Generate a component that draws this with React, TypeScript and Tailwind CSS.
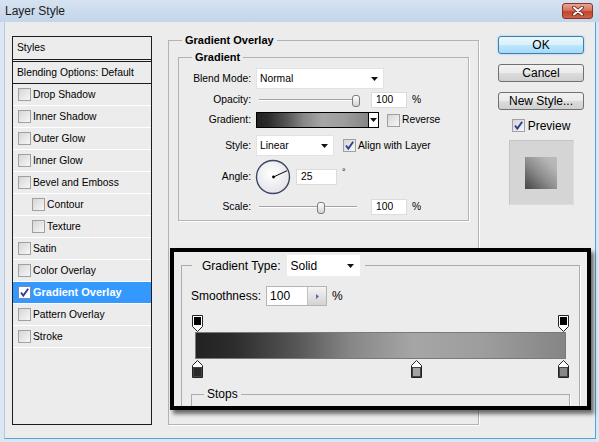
import React from "react"

type StyleItem = { label: string; indent?: boolean; checked?: boolean; active?: boolean }

const styleItems: StyleItem[] = [
  { label: "Drop Shadow" },
  { label: "Inner Shadow" },
  { label: "Outer Glow" },
  { label: "Inner Glow" },
  { label: "Bevel and Emboss" },
  { label: "Contour", indent: true },
  { label: "Texture", indent: true },
  { label: "Satin" },
  { label: "Color Overlay" },
  { label: "Gradient Overlay", checked: true, active: true },
  { label: "Pattern Overlay" },
  { label: "Stroke" },
]

// gradient stops (location in %)
const opacityStops = [0, 100]
const colorStops = [
  { at: 0, color: "#2a2a2a" },
  { at: 59.7, color: "#a3a3a3" },
  { at: 100, color: "#878787" },
]

const GRADIENT =
  "bg-[linear-gradient(to_right,#222_0%,#2c2c2c_10%,#555_27%,#878787_42%,#a6a6a6_59%,#9d9d9d_78%,#858585_100%)]"

function CheckBox({ checked = false, white = false }: { checked?: boolean; white?: boolean }) {
  return (
    <span
      className={`flex h-[13px] w-[13px] shrink-0 items-center justify-center border ${
        white ? "border-[#7c89b3] bg-white" : "border-[#a0a0a0] bg-[linear-gradient(135deg,#d6d6d6,#f7f7f7)]"
      }`}
    >
      {checked && (
        <svg width="11" height="11" viewBox="0 0 11 11">
          <path d="M2 5.5 L4.3 8.6 L9.2 1.8" fill="none" stroke="#2c3f9c" strokeWidth="1.9" />
        </svg>
      )}
    </span>
  )
}

function DownArrow() {
  return (
    <svg width="7" height="4" viewBox="0 0 7 4">
      <path d="M0 0H7L3.5 4Z" fill="#111" />
    </svg>
  )
}

function Slider({ pct }: { pct: number }) {
  return (
    <div className="relative h-[16px] w-[106px]">
      <div className="absolute left-[3px] top-[7px] h-[2px] w-[98px] border-t border-[#a3a3a3] bg-white" />
      <div
        className="absolute top-[3px] h-[12px] w-[8px] rounded-[3px] border border-[#7b7b7b] bg-[linear-gradient(#ffffff,#d2d2d2)]"
        style={{ left: `${pct * 98 - 2}px` }}
      />
    </div>
  )
}

function NumBox({ value }: { value: string }) {
  return (
    <div className="flex h-[16px] w-[36px] items-center border border-[#dcdcdc] bg-white pl-[4px]">{value}</div>
  )
}

function OpacityStop({ at }: { at: number }) {
  return (
    <svg
      className="absolute top-0"
      style={{ left: `${1 + (at / 100) * 366}px` }}
      width="11"
      height="17"
      viewBox="0 0 11 17"
    >
      <path d="M0.5 0.5H10.5V11.5L5.5 16.5L0.5 11.5Z" fill="#fff" stroke="#222" />
      <rect x="2" y="2" width="7" height="8" fill="#000" />
    </svg>
  )
}

function ColorStop({ at, color }: { at: number; color: string }) {
  return (
    <svg
      className="absolute top-0"
      style={{ left: `${1 + (at / 100) * 366}px` }}
      width="11"
      height="18"
      viewBox="0 0 11 18"
    >
      <path d="M5.5 0.5L10.5 5.5V17.5H0.5V5.5Z" fill="#fff" stroke="#222" />
      <rect x="1.5" y="7.5" width="8" height="9" fill={color} stroke="#444" />
    </svg>
  )
}

function Button({ label, primary = false }: { label: string; primary?: boolean }) {
  return (
    <div
      className={`flex h-[18px] w-[86px] items-center justify-center rounded-[3px] border text-[12px] ${
        primary
          ? "border-[#3c7fb1] bg-[linear-gradient(#eaf6fd_0%,#d9f0fc_50%,#bee6fd_51%,#a7d9f5_100%)] shadow-[0_0_2px_#6fc3ef]"
          : "border-[#707070] bg-[linear-gradient(#f2f2f2_0%,#ebebeb_50%,#dddddd_51%,#cfcfcf_100%)]"
      }`}
    >
      {label}
    </div>
  )
}

function StylesPanel() {
  return (
    <div className="ml-[7px] mt-[14px] flex h-[389px] w-[140px] flex-col border border-[#1d1d1d] text-[10.3px]">
      <div className="flex h-[25px] items-center border-b-[3px] border-double border-[#1d1d1d] pl-[4px]">Styles</div>
      <div className="flex h-[22px] items-center border-b border-[#1d1d1d] pl-[4px]">Blending Options: Default</div>
      {styleItems.map((item) => (
        <div
          key={item.label}
          className={`flex h-[22px] items-center gap-[2px] border-b border-white ${item.indent ? "pl-[19px]" : "pl-[5px]"} ${
            item.active ? "bg-[#3399ff] text-[11px] font-bold text-white" : ""
          }`}
        >
          <CheckBox checked={item.checked} white={item.active} />
          <span>{item.label}</span>
        </div>
      ))}
    </div>
  )
}

function Label({ text }: { text: string }) {
  return <span className="w-[73px] shrink-0 pr-[1px] text-right">{text}</span>
}

function GradientPanel() {
  return (
    <fieldset className="ml-[16px] mt-[11px] h-[392px] w-[311px] border border-[#b3b3b3] px-[9px] text-[10.3px] shadow-[1px_1px_0_#fff]">
      <legend className="ml-[4px] px-[3px] text-[11px] font-bold leading-[14px]">Gradient Overlay</legend>
      <fieldset className="mt-[3px] h-[171px] border border-[#b3b3b3] shadow-[1px_1px_0_#fff]">
        <legend className="ml-[13px] px-[3px] text-[11px] font-bold leading-[14px]">Gradient</legend>
        <div className="mt-[4px] flex flex-col">
          <div className="flex h-[21px] items-center gap-[4px]">
            <Label text="Blend Mode:" />
            <div className="flex h-[21px] w-[128px] items-center justify-between border border-[#e2e2e2] bg-white pl-[3px] pr-[5px]">
              <span>Normal</span>
              <DownArrow />
            </div>
          </div>
          <div className="mt-[3px] flex h-[16px] items-center gap-[4px]">
            <Label text="Opacity:" />
            <Slider pct={1} />
            <div className="ml-[5px]">
              <NumBox value="100" />
            </div>
            <span className="ml-[1px]">%</span>
          </div>
          <div className="mt-[4px] flex h-[16px] items-center gap-[4px]">
            <Label text="Gradient:" />
            <div className="flex h-[16px] w-[123px] border border-black">
              <div className={`flex-1 ${GRADIENT}`} />
              <div className="flex w-[10px] items-center justify-center border-l border-black bg-white">
                <DownArrow />
              </div>
            </div>
            <div className="ml-[4px] flex items-center gap-[2px]">
              <CheckBox />
              <span>Reverse</span>
            </div>
          </div>
          <div className="mt-[7px] flex h-[21px] items-center gap-[4px]">
            <Label text="Style:" />
            <div className="flex h-[21px] w-[78px] items-center justify-between border border-[#e2e2e2] bg-white pl-[3px] pr-[5px]">
              <span>Linear</span>
              <DownArrow />
            </div>
            <div className="ml-[5px] flex items-center gap-[2px]">
              <CheckBox checked />
              <span>Align with Layer</span>
            </div>
          </div>
          <div className="mt-[3px] flex h-[36px] items-center gap-[3px]">
            <Label text="Angle:" />
            <svg width="36" height="36" viewBox="0 0 36 36">
              <defs>
                <radialGradient id="dial" cx="0.45" cy="0.4" r="0.6">
                  <stop offset="0" stopColor="#ffffff" />
                  <stop offset="1" stopColor="#e4e4ea" />
                </radialGradient>
              </defs>
              <circle cx="18" cy="18" r="16.5" fill="url(#dial)" stroke="#3c4764" strokeWidth="1.4" />
              <line x1="18.5" y1="18" x2="32" y2="11.7" stroke="#000" strokeWidth="1" />
              <circle cx="18.5" cy="18" r="1.4" fill="#000" />
            </svg>
            <div className="ml-[2px] flex h-[16px] w-[41px] items-center border border-[#dcdcdc] bg-white pl-[4px]">25</div>
            <span className="ml-[2px] mb-[8px] text-[9px]">°</span>
          </div>
          <div className="mt-[4px] flex h-[16px] items-center gap-[4px]">
            <Label text="Scale:" />
            <Slider pct={0.64} />
            <div className="ml-[5px]">
              <NumBox value="100" />
            </div>
            <span className="ml-[1px]">%</span>
          </div>
        </div>
      </fieldset>
    </fieldset>
  )
}

function RightColumn() {
  return (
    <div className="ml-[19px] mt-[14px] flex w-[86px] flex-col items-center">
      <Button label="OK" primary />
      <div className="mt-[10px]">
        <Button label="Cancel" />
      </div>
      <div className="mt-[10px]">
        <Button label="New Style..." />
      </div>
      <div className="mt-[9px] flex h-[13px] items-center gap-[3px] text-[12px]">
        <CheckBox checked />
        <span>Preview</span>
      </div>
      <div className="mt-[8px] flex h-[65px] w-[65px] items-center justify-center border border-t-[#c4c4c4] border-l-[#c4c4c4] border-b-[#dcdcdc] border-r-[#dcdcdc] bg-[#d5d5d5]">
        <div className="h-[32px] w-[32px] bg-[linear-gradient(45deg,#454545_0%,#8c8c8c_45%,#b5b5b5_80%,#bcbcbc_100%)]" />
      </div>
    </div>
  )
}

function Callout() {
  return (
    <div className="absolute left-[170px] top-[248px] h-[162px] w-[421px] overflow-hidden border-4 border-black bg-[#ececec] text-[12px] shadow-[3px_4px_4px_rgba(0,0,0,0.55)]">
      <fieldset className="ml-[7px] mt-[3px] h-[200px] w-[399px] border border-[#ababab] px-[9px] shadow-[1px_1px_0_#fff]">
        <legend className="ml-[1px] pl-[10px] pr-[5px]">
          <div className="flex h-[21px] items-center gap-[6px]">
            <span>Gradient Type:</span>
            <div className="flex h-[21px] w-[73px] items-center justify-between bg-white pl-[4px] pr-[6px]">
              <span>Solid</span>
              <DownArrow />
            </div>
          </div>
        </legend>
        <div className="mt-[10px] flex h-[20px] items-center gap-[5px]">
          <span>Smoothness:</span>
          <div className="flex h-[20px] w-[61px] border border-[#b4b4b4] bg-white">
            <span className="flex flex-1 items-center pl-[3px]">100</span>
            <div className="flex w-[19px] items-center justify-center border-l border-[#c0c0c0] bg-[linear-gradient(#f4f4f4,#d3d3d3)]">
              <svg width="3" height="5" viewBox="0 0 3 5">
                <path d="M0 0L3 2.5L0 5Z" fill="#5b6a9c" />
              </svg>
            </div>
          </div>
          <span>%</span>
        </div>
        <div className="relative mt-[9px] h-[17px]">
          {opacityStops.map((at) => (
            <OpacityStop key={at} at={at} />
          ))}
        </div>
        <div className={`mx-[4px] h-[27px] border border-[#7a7a7a] ${GRADIENT}`} />
        <div className="relative mt-[1px] h-[18px]">
          {colorStops.map((s) => (
            <ColorStop key={s.at} at={s.at} color={s.color} />
          ))}
        </div>
        <fieldset className="mt-[9px] h-[60px] border border-[#ababab] shadow-[1px_1px_0_#fff]">
          <legend className="ml-[12px] px-[3px] leading-[14px]">Stops</legend>
        </fieldset>
      </fieldset>
    </div>
  )
}

export default function App() {
  return (
    <div className="relative h-[442px] w-[599px] overflow-hidden bg-[#dce7f3] font-['Liberation_Sans',Arial,sans-serif] text-black">
      <div className="flex h-[22px] items-center justify-between bg-[linear-gradient(#d5e2f1,#c4d5ea)] pl-[5px] pr-[6px]">
        <span className="text-[12px] text-[#1b1b1b]">Layer Style</span>
        <div className="flex h-[16px] w-[31px] items-center justify-center rounded-[3px] border border-[#8a3424] bg-[linear-gradient(#e9a593_0%,#d9735f_45%,#c2432c_55%,#d0614a_100%)]">
          <svg width="12" height="10" viewBox="0 0 12 10">
            <path d="M2 1.5L10 8.5M10 1.5L2 8.5" stroke="#5a1d12" strokeWidth="3.6" strokeLinecap="round" />
            <path d="M2 1.5L10 8.5M10 1.5L2 8.5" stroke="#fff" strokeWidth="2" strokeLinecap="round" />
          </svg>
        </div>
      </div>
      <div className="ml-[4px] flex h-[417px] w-[592px] items-start border-b border-l border-r border-b-[#47a6dc] border-l-[#b7c9de] border-r-[#47a6dc] bg-[#ececec]">
        <StylesPanel />
        <GradientPanel />
        <RightColumn />
      </div>
      <Callout />
    </div>
  )
}
